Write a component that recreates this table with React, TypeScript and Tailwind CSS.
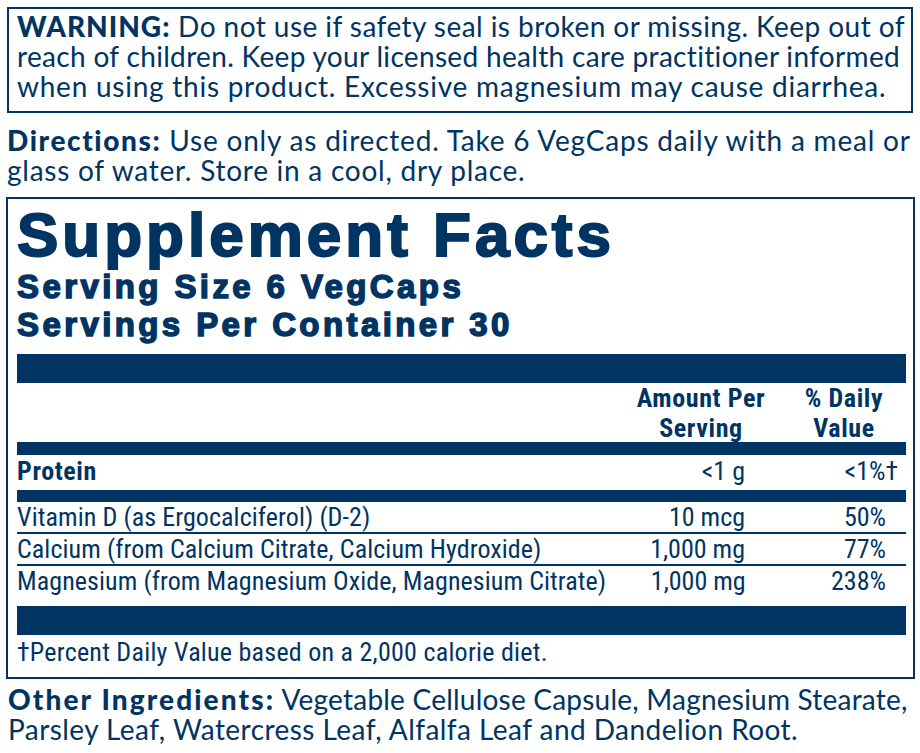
const rows = [
  { name: "Vitamin D (as Ergocalciferol) (D-2)", amount: "10 mcg", dv: "50%" },
  { name: "Calcium (from Calcium Citrate, Calcium Hydroxide)", amount: "1,000 mg", dv: "77%" },
  { name: "Magnesium (from Magnesium Oxide, Magnesium Citrate)", amount: "1,000 mg", dv: "238%" },
];

export default function App() {
  return (
    <div className="w-[920px] h-[753px] bg-white pt-[7px] pl-[7px] text-[#003462] overflow-hidden">
      {/* warning */}
      <div className="w-[906px] h-[106px] border-2 border-[#003462] pl-[8px] pt-[2px] font-['Lato',sans-serif] text-[28px] leading-[30px] whitespace-nowrap">
        <div className="tracking-[0.45px]">
          <span className="font-black tracking-[1px]">WARNING:</span> Do not use if safety seal is broken or missing. Keep out of
        </div>
        <div className="tracking-[0.33px]">reach of children. Keep your licensed health care practitioner informed</div>
        <div className="tracking-[0.75px]">when using this product. Excessive magnesium may cause diarrhea.</div>
      </div>

      {/* directions */}
      <div className="mt-[12px] font-['Lato',sans-serif] text-[28px] leading-[30px] whitespace-nowrap">
        <div className="tracking-[0.8px]">
          <span className="font-black tracking-[1.6px]">Directions:</span> Use only as directed. Take 6 VegCaps daily with a meal or
        </div>
        <div className="tracking-[0.75px]">glass of water. Store in a cool, dry place.</div>
      </div>

      {/* supplement facts */}
      <div className="mt-[12px] ml-[-1px] w-[909px] h-[482px] border-2 border-[#003462] pl-[9px] pr-[7px]">
        <div className="pt-[5px] font-['Liberation_Sans',Arial,sans-serif] font-bold text-[62px] leading-[62px] tracking-[4px] [-webkit-text-stroke:2px_#003462] whitespace-nowrap">
          Supplement Facts
        </div>
        <div className="pt-[2px] font-['Liberation_Sans',Arial,sans-serif] font-bold text-[33px] leading-[38px] tracking-[3.4px] [-webkit-text-stroke:1.5px_#003462] whitespace-nowrap">
          <div>Serving Size 6 VegCaps</div>
          <div>Servings Per Container 30</div>
        </div>
        <div className="mt-[10px] h-[29px] bg-[#003462]" />

        <div className="font-['Roboto_Condensed','Roboto',sans-serif]">
          <div className="flex justify-end font-bold text-[26px] leading-[30px] tracking-[0.6px] h-[59px]">
            <div className="w-[150px] text-center">
              Amount Per
              <br />
              Serving
            </div>
            <div className="w-[124px] ml-[6px] text-center">
              % Daily
              <br />
              Value
            </div>
          </div>
          <div className="h-[13px] bg-[#003462]" />
          <div className="flex h-[35px] pt-[1px] text-[26px] leading-[30px]">
            <div className="flex-1 font-bold tracking-[0.6px]">Protein</div>
            <div className="w-[140px] text-right">&lt;1 g</div>
            <div className="w-[161px] text-right pr-[20px]">
              &lt;1%<span className="mr-[-12px]">†</span>
            </div>
          </div>
          <div className="h-[12px] bg-[#003462]" />
          {rows.map((r, i) => (
            <div
              key={r.name}
              className={`flex text-[26px] leading-[30px] ${i < rows.length - 1 ? "h-[32px] border-b-2 border-[#003462]" : "h-[40px]"}`}
            >
              <div className="flex-1 whitespace-nowrap tracking-[0.08px]">{r.name}</div>
              <div className="w-[140px] text-right">{r.amount}</div>
              <div className="w-[161px] text-right pr-[20px]">{r.dv}</div>
            </div>
          ))}
          <div className="h-[29px] bg-[#003462]" />
          <div className="pt-[2px] text-[26px] leading-[30px] tracking-[0.25px] whitespace-nowrap">
            †Percent Daily Value based on a 2,000 calorie diet.
          </div>
        </div>
      </div>

      {/* other ingredients */}
      <div className="mt-[5px] ml-[1px] font-['Lato',sans-serif] text-[28px] leading-[30px] whitespace-nowrap">
        <div className="tracking-[0.22px]">
          <span className="font-black tracking-[2.1px]">Other Ingredients:</span> Vegetable Cellulose Capsule, Magnesium Stearate,
        </div>
        <div className="tracking-[0.45px]">Parsley Leaf, Watercress Leaf, Alfalfa Leaf and Dandelion Root.</div>
      </div>
    </div>
  );
}
